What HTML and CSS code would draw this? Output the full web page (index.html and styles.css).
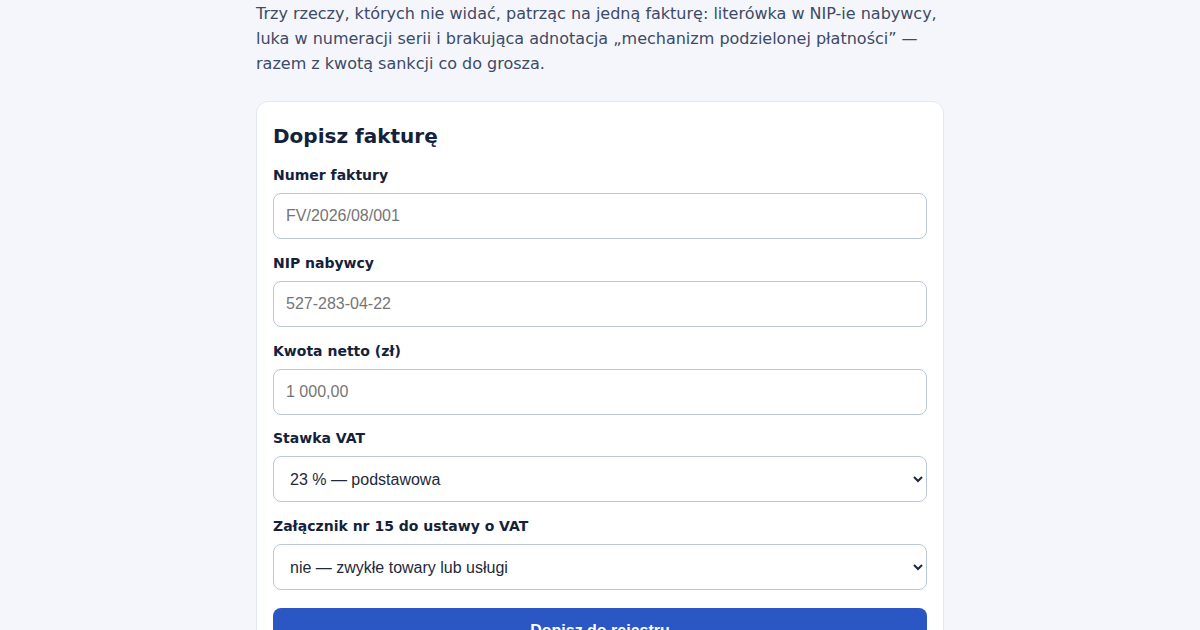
FILE: index.html
```html
<!DOCTYPE html>
<html lang="pl">
<head>
<meta charset="utf-8">
<title>Dopisz fakturę</title>
<link rel="stylesheet" href="styles.css">
</head>
<body>
<main class="page">
  <p class="lead">Trzy rzeczy, których nie widać, patrząc na jedną fakturę: literówka w NIP-ie nabywcy, luka w numeracji serii i brakująca adnotacja „mechanizm podzielonej płatności” — razem z kwotą sankcji co do grosza.</p>
  <form class="card">
    <h2 class="card-title">Dopisz fakturę</h2>
    <div class="field">
      <label class="label" for="nr">Numer faktury</label>
      <input class="control" id="nr" type="text" placeholder="FV/2026/08/001">
    </div>
    <div class="field">
      <label class="label" for="nip">NIP nabywcy</label>
      <input class="control" id="nip" type="text" placeholder="527-283-04-22">
    </div>
    <div class="field">
      <label class="label" for="kw">Kwota netto (zł)</label>
      <input class="control" id="kw" type="text" placeholder="1 000,00">
    </div>
    <div class="field">
      <label class="label" for="vat">Stawka VAT</label>
      <select class="control select" id="vat">
        <option>23 % — podstawowa</option>
        <option>8 % — obniżona</option>
        <option>5 % — obniżona</option>
        <option>0 %</option>
      </select>
    </div>
    <div class="field">
      <label class="label" for="zal">Załącznik nr 15 do ustawy o VAT</label>
      <select class="control select" id="zal">
        <option>nie — zwykłe towary lub usługi</option>
        <option>tak — towary z załącznika nr 15</option>
      </select>
    </div>
    <button class="btn" type="button">Dopisz do rejestru</button>
  </form>
</main>
</body>
</html>
```

FILE: styles.css
```css
html, body {
  margin: 0;
  padding: 0;
  background: #f4f6fb;
}
body {
  font-family: "DejaVu Sans", sans-serif;
  color: #15213b;
}
.page {
  width: 688px;
  margin: 0 auto;
  padding-top: 1px;
}
.lead {
  margin: 0;
  font-size: 16px;
  line-height: 25px;
  color: #3d4a66;
}
.card {
  margin-top: 25px;
  background: #ffffff;
  border: 1px solid #e2e7f0;
  border-radius: 12px;
  padding: 22px 16px 24px;
  display: flex;
  flex-direction: column;
}
.card-title {
  margin: 0 0 17px;
  font-size: 20px;
  line-height: 24px;
  font-weight: bold;
  color: #14213d;
}
.field {
  display: flex;
  flex-direction: column;
  margin-bottom: 13.75px;
}
.label {
  font-size: 14px;
  line-height: 20px;
  font-weight: bold;
  color: #15213b;
  margin-bottom: 8px;
}
.control {
  box-sizing: border-box;
  height: 46px;
  width: 100%;
  border: 1px solid #bcc7db;
  border-radius: 8px;
  background: #ffffff;
  padding: 0 12px;
  font-family: "Liberation Sans", Arial, sans-serif;
  font-size: 16px;
  color: #1e293b;
  margin: 0;
}
.control::placeholder {
  color: #757575;
}
.select {
  padding: 0 8px 0 12px;
}
.btn {
  margin-top: 4.25px;
  height: 46px;
  width: 100%;
  border: none;
  border-radius: 8px;
  background: #2b57c4;
  color: #ffffff;
  font-family: "Liberation Sans", Arial, sans-serif;
  font-size: 16px;
  font-weight: bold;
}
```
